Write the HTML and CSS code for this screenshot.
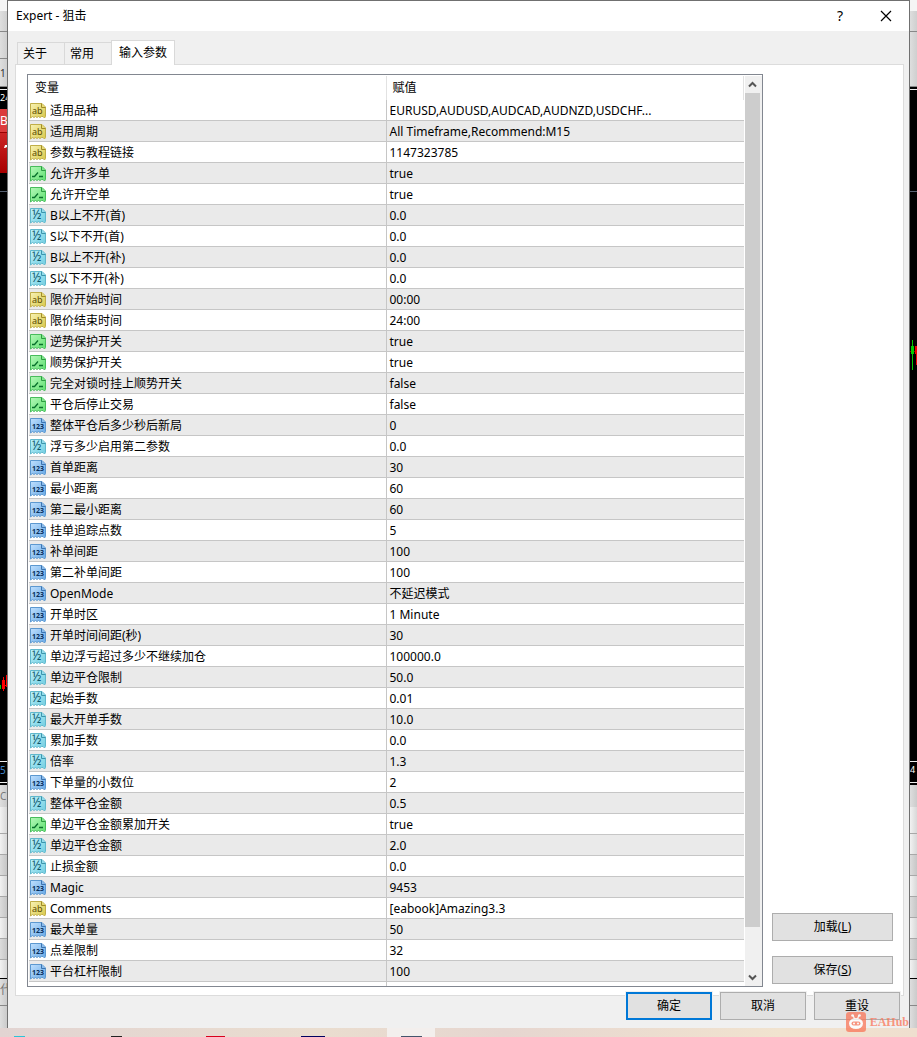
FILE: index.html
```
<!DOCTYPE html>
<html lang="zh-CN">
<head>
<meta charset="utf-8">
<title>Expert - 狙击</title>
<link rel="stylesheet" href="styles.css">
</head>
<body>
<svg class="defs" aria-hidden="true">
  <defs>
    <linearGradient id="gy" x1="0" y1="0" x2="1" y2="1"><stop offset="0" stop-color="#f8f2b4"/><stop offset="1" stop-color="#d8c84a"/></linearGradient>
    <linearGradient id="gg" x1="0" y1="0" x2="1" y2="1"><stop offset="0" stop-color="#b4f8b8"/><stop offset="1" stop-color="#5fe070"/></linearGradient>
    <linearGradient id="gc" x1="0" y1="0" x2="1" y2="1"><stop offset="0" stop-color="#bdf2fa"/><stop offset="1" stop-color="#70cce0"/></linearGradient>
    <linearGradient id="gb" x1="0" y1="0" x2="1" y2="1"><stop offset="0" stop-color="#bfe0ff"/><stop offset="1" stop-color="#68a8e4"/></linearGradient>
    <path id="page" d="M.5.5H12L15.500 4V13.500L14.500 15 13 13.500 11.500 13.500 10 14.500 8.500 13.500 7 14.500 5.500 13.500 4 14.500 2.500 13.500.5 15Z"/>
    <path id="fold" d="M11.500.5V4.500H15.500"/>
    <symbol id="str" viewBox="0 0 16 16"><use href="#page" fill="url(#gy)" stroke="#c0ae48"/><use href="#fold" fill="#e8dc78" stroke="#a08c28"/><text x="2" y="11" class="glyph" fill="#5c4c00">ab</text></symbol>
    <symbol id="bool" viewBox="0 0 16 16"><use href="#page" fill="url(#gg)" stroke="#48bc5c"/><use href="#fold" fill="#80e88c" stroke="#2c9c40"/><path d="M2 10.500H4.500L8 6.500M9 10.500H13" fill="none" stroke="#08702c" stroke-width="1.300"/></symbol>
    <symbol id="dbl" viewBox="0 0 16 16"><use href="#page" fill="url(#gc)" stroke="#60b8cc"/><use href="#fold" fill="#94dcec" stroke="#3c94ac"/><text x="2" y="11" class="half" fill="#0c5468">½</text></symbol>
    <symbol id="int" viewBox="0 0 16 16"><use href="#page" fill="url(#gb)" stroke="#5c98d0"/><use href="#fold" fill="#8cbcec" stroke="#3c74b0"/><text x="2" y="11" class="digits" fill="#08305c">123</text></symbol>
  </defs>
</svg>
<div class="desktop">
  <div class="strip" aria-hidden="true">
    <div class="s h11 pale"></div><div class="s h21 tool"></div><div class="s h27 tool"></div><div class="s h28 tool dark-text">1</div>
    <div class="s h3 black whiteline"></div><div class="s h19 black small">24</div><div class="s h24 red">B</div><div class="s h40 crimson"><svg width="7" height="20" viewBox="0 0 7 20"><path d="M4 15L5 12H7V14L5 15Z" fill="#fff"/></svg></div>
    <div class="s h19 black blueline"></div>
    <div class="s h569 black chart-left"><svg width="7" height="20" viewBox="0 0 7 20"><path d="M0 10h1v4H0z" fill="#0c0"/><path d="M3 2h1v14H3zM6 0h1v12H6zM2 5h3v9H2zM5 10h2v1H5z" fill="#f00"/></svg></div>
    <div class="s h22 black whiteline blue-text">5</div><div class="s h2 black"></div>
    <div class="s h22 tool-flat">C</div><div class="s h27 light"></div><div class="s h21 light"></div><div class="s h21 mid"></div><div class="s h21 light"></div><div class="s h21 mid"></div><div class="s h21 light"></div><div class="s h21 mid"></div><div class="s h19 light blackline"></div>
    <div class="s h27 tool-flat ruled cjk">代</div><div class="s rest tool-flat"></div>
  </div>

  <main class="dialog">
    <header class="titlebar">
      <h1>Expert - 狙击</h1>
      <button class="caption" aria-label="帮助"><span>?</span></button>
      <button class="caption" aria-label="关闭"><svg width="12" height="12" viewBox="0 0 12 12"><path d="M1 1L11 11M11 1L1 11" stroke="#000" stroke-width="1.200"/></svg></button>
    </header>
    <div class="tabs" role="tablist">
      <button role="tab" class="tab">关于</button><button role="tab" class="tab">常用</button><button role="tab" class="tab active" aria-selected="true">输入参数</button>
    </div>
    <section class="pane">
      <div class="list">
        <table>
          <thead><tr><th>变量</th><th>赋值</th></tr></thead>
          <tbody>
<tr><td><svg><use href="#str"/></svg>适用品种</td><td>EURUSD,AUDUSD,AUDCAD,AUDNZD,USDCHF...</td></tr>
<tr><td><svg><use href="#str"/></svg>适用周期</td><td>All Timeframe,Recommend:M15</td></tr>
<tr><td><svg><use href="#str"/></svg>参数与教程链接</td><td>1147323785</td></tr>
<tr><td><svg><use href="#bool"/></svg>允许开多单</td><td>true</td></tr>
<tr><td><svg><use href="#bool"/></svg>允许开空单</td><td>true</td></tr>
<tr><td><svg><use href="#dbl"/></svg>B以上不开(首)</td><td>0.0</td></tr>
<tr><td><svg><use href="#dbl"/></svg>S以下不开(首)</td><td>0.0</td></tr>
<tr><td><svg><use href="#dbl"/></svg>B以上不开(补)</td><td>0.0</td></tr>
<tr><td><svg><use href="#dbl"/></svg>S以下不开(补)</td><td>0.0</td></tr>
<tr><td><svg><use href="#str"/></svg>限价开始时间</td><td>00:00</td></tr>
<tr><td><svg><use href="#str"/></svg>限价结束时间</td><td>24:00</td></tr>
<tr><td><svg><use href="#bool"/></svg>逆势保护开关</td><td>true</td></tr>
<tr><td><svg><use href="#bool"/></svg>顺势保护开关</td><td>true</td></tr>
<tr><td><svg><use href="#bool"/></svg>完全对锁时挂上顺势开关</td><td>false</td></tr>
<tr><td><svg><use href="#bool"/></svg>平仓后停止交易</td><td>false</td></tr>
<tr><td><svg><use href="#int"/></svg>整体平仓后多少秒后新局</td><td>0</td></tr>
<tr><td><svg><use href="#dbl"/></svg>浮亏多少启用第二参数</td><td>0.0</td></tr>
<tr><td><svg><use href="#int"/></svg>首单距离</td><td>30</td></tr>
<tr><td><svg><use href="#int"/></svg>最小距离</td><td>60</td></tr>
<tr><td><svg><use href="#int"/></svg>第二最小距离</td><td>60</td></tr>
<tr><td><svg><use href="#int"/></svg>挂单追踪点数</td><td>5</td></tr>
<tr><td><svg><use href="#int"/></svg>补单间距</td><td>100</td></tr>
<tr><td><svg><use href="#int"/></svg>第二补单间距</td><td>100</td></tr>
<tr><td><svg><use href="#int"/></svg>OpenMode</td><td>不延迟模式</td></tr>
<tr><td><svg><use href="#int"/></svg>开单时区</td><td>1 Minute</td></tr>
<tr><td><svg><use href="#int"/></svg>开单时间间距(秒)</td><td>30</td></tr>
<tr><td><svg><use href="#dbl"/></svg>单边浮亏超过多少不继续加仓</td><td>100000.0</td></tr>
<tr><td><svg><use href="#dbl"/></svg>单边平仓限制</td><td>50.0</td></tr>
<tr><td><svg><use href="#dbl"/></svg>起始手数</td><td>0.01</td></tr>
<tr><td><svg><use href="#dbl"/></svg>最大开单手数</td><td>10.0</td></tr>
<tr><td><svg><use href="#dbl"/></svg>累加手数</td><td>0.0</td></tr>
<tr><td><svg><use href="#dbl"/></svg>倍率</td><td>1.3</td></tr>
<tr><td><svg><use href="#int"/></svg>下单量的小数位</td><td>2</td></tr>
<tr><td><svg><use href="#dbl"/></svg>整体平仓金额</td><td>0.5</td></tr>
<tr><td><svg><use href="#bool"/></svg>单边平仓金额累加开关</td><td>true</td></tr>
<tr><td><svg><use href="#dbl"/></svg>单边平仓金额</td><td>2.0</td></tr>
<tr><td><svg><use href="#dbl"/></svg>止损金额</td><td>0.0</td></tr>
<tr><td><svg><use href="#int"/></svg>Magic</td><td>9453</td></tr>
<tr><td><svg><use href="#str"/></svg>Comments</td><td>[eabook]Amazing3.3</td></tr>
<tr><td><svg><use href="#int"/></svg>最大单量</td><td>50</td></tr>
<tr><td><svg><use href="#int"/></svg>点差限制</td><td>32</td></tr>
<tr><td><svg><use href="#int"/></svg>平台杠杆限制</td><td>100</td></tr>
          </tbody>
          <tfoot><tr><td></td><td></td></tr></tfoot>
        </table>
        <div class="scrollbar">
          <button class="arrow" aria-label="向上滚动"><svg width="9" height="7" viewBox="0 0 9 7"><path d="M1 5.500L4.500 2 8 5.500" fill="none" stroke="#555" stroke-width="2"/></svg></button>
          <div class="track"><div class="thumb"></div></div>
          <button class="arrow" aria-label="向下滚动"><svg width="9" height="7" viewBox="0 0 9 7"><path d="M1 1.500L4.500 5 8 1.500" fill="none" stroke="#555" stroke-width="2"/></svg></button>
        </div>
      </div>
      <div class="side">
        <button class="btn">加载(<u>L</u>)</button>
        <button class="btn">保存(<u>S</u>)</button>
      </div>
    </section>
    <footer class="actions">
      <button class="btn default">确定</button><button class="btn">取消</button><button class="btn">重设</button>
    </footer>
  </main>

  <div class="strip right" aria-hidden="true">
    <div class="s h11 pale"></div><div class="s h21 tool"></div><div class="s h55 tool"></div>
    <div class="s h3 black whiteline"></div><div class="s h83 black"></div>
    <div class="s h19 black blueline"></div>
    <div class="s h569 black chart-right"><svg width="7" height="30" viewBox="0 0 7 30"><path d="M0 11h7v1H0z" fill="#900"/><path d="M2 0h1v30H2zM1 6h3v8H1z" fill="#0c0"/><path d="M5 6h2v8H5zM6 14h1v11H6z" fill="#e00"/></svg></div>
    <div class="s h22 black whiteline small">4</div><div class="s h2 black"></div>
    <div class="s h22 tool-flat"></div><div class="s h27 light"></div><div class="s h21 light"></div><div class="s h21 mid"></div><div class="s h21 light"></div><div class="s h21 mid"></div><div class="s h21 light"></div><div class="s h21 mid"></div><div class="s h19 light blackline"></div>
    <div class="s h27 tool-flat ruled"></div><div class="s rest tool-flat"></div>
  </div>
</div>
<div class="taskbar" aria-hidden="true"><i class="cyan"></i><i class="charcoal"></i><i class="red"></i><i class="navy"></i><b><i class="slate"></i></b></div>
<div class="watermark">
  <svg width="20" height="20" viewBox="0 0 20 20"><rect width="20" height="20" rx="3" fill="#fa7658"/><path d="M7 3L8.500 7M13 3L11.500 7" stroke="#fff" stroke-width="1.200"/><circle cx="6.500" cy="3.500" r="1.300" fill="#fff"/><circle cx="13.500" cy="3.500" r="1.300" fill="#fff"/><ellipse cx="10" cy="11.500" rx="7" ry="5.500" fill="#fff"/><rect x="5.500" y="9.500" width="9" height="4" rx="2" fill="#fa7658"/><circle cx="8" cy="11.500" r="1" fill="#fff"/><circle cx="12" cy="11.500" r="1" fill="#fff"/></svg>
  <span>EAHub</span>
</div>
</body>
</html>
```
FILE: styles.css
```
* { box-sizing: border-box; }
body {
  margin: 0;
  min-height: 100vh;
  display: flex;
  flex-direction: column;
  position: relative;
  overflow-x: hidden;
  color: #000;
  font: 12px/16px "Noto Sans", "Noto Sans CJK SC", sans-serif;
}
button { font: inherit; color: inherit; padding: 0; border: 0; background: none; }
.defs { position: absolute; width: 0; height: 0; }
.glyph { font: 9px "Noto Sans", sans-serif; }
.half { font: 12px "Noto Sans", sans-serif; }
.digits { font: bold 7px "Noto Sans", sans-serif; }

.desktop { flex: 1; display: grid; grid-template-columns: 7px 1fr 7px; }

/* Slices of the trading terminal behind the dialog */
.strip { display: flex; flex-direction: column; overflow: hidden; color: #fff; font-size: 10px; }
.s { flex: none; overflow: hidden; white-space: nowrap; }
.h2 { height: 2px; } .h3 { height: 3px; } .h11 { height: 11px; } .h19 { height: 19px; }
.h21 { height: 21px; } .h22 { height: 22px; } .h24 { height: 24px; } .h27 { height: 27px; }
.h28 { height: 28px; } .h40 { height: 40px; } .h55 { height: 55px; } .h83 { height: 83px; }
.h569 { height: 569px; }
.rest { flex: 1; }
.pale { background: #f5f5f5; }
.tool { background: linear-gradient(90deg, #dedede, #cfcfcf); border-bottom: 1px solid #888; }
.dark-text { color: #333; line-height: 28px; }
.tool-flat { background: linear-gradient(90deg, #dedede, #cbcbcb); color: #777; line-height: 22px; }
.light { background: linear-gradient(90deg, #f2f2f2, #d8d8d8); border-bottom: 1px solid #a8a8a8; }
.mid { background: linear-gradient(90deg, #dcdcdc, #c6c6c6); border-bottom: 1px solid #a8a8a8; }
.black { background: #000; }
.whiteline { border-top: 1px solid #eee; border-bottom: 1px solid #eee; }
.h3.whiteline { border-top-color: #000; }
.blueline { border-bottom: 1px solid #566070; }
.blackline { border-bottom-color: #000; }
.ruled { border-bottom: 1px solid #888; }
.small { font-size: 9px; }
.cjk { font-size: 12px; }
.blue-text { color: #48c; }
.red { background: #dc3c3c; line-height: 24px; font-size: 12px; border-bottom: 1px solid #900; }
.crimson { background: linear-gradient(#cc2424, #a80000); }
.chart-left { padding-top: 483px; }
.chart-right { padding-top: 148px; }
.strip svg { display: block; }

.dialog {
  display: flex;
  flex-direction: column;
  min-width: 0;
  background: #f0f0f0;
  border: 1px solid #707070;
  border-bottom: 0;
}
.titlebar { display: flex; height: 30px; background: #fff; padding-left: 8px; align-items: center; }
.titlebar h1 { flex: 1; margin: 0; font-size: 12px; font-weight: 400; }
.caption { width: 46px; height: 30px; display: flex; align-items: center; justify-content: center; font-size: 14px; }

.tabs { display: flex; align-items: flex-end; height: 34px; padding-left: 9px; position: relative; margin-bottom: -1px; }
.tab { height: 23px; padding: 0 17px 0 5px; background: #f0f0f0; border: 1px solid #d9d9d9; border-right: 0; }
.tab.active { height: 25px; padding: 0 7px 1px; background: #fff; border-right: 1px solid #d9d9d9; border-bottom: 0; }

.pane { display: flex; gap: 9px; margin: 0 5px 0 7px; padding: 9px 10px 8px 11px; background: #fff; border: 1px solid #dcdcdc; }
.list { flex: 1; display: flex; gap: 1px; padding: 1px 0 0 1px; border: 1px solid #828790; }
table { flex: 1; width: 100%; border-collapse: separate; border-spacing: 0; table-layout: fixed; align-self: flex-start; }
th { width: 50%; height: 24px; padding: 0 6px; text-align: left; font-weight: 400; border-right: 1px solid #e2e2e2; }
td { height: 21px; padding: 2px 3px 0; border-bottom: 1px solid #c6c6c6; white-space: nowrap; overflow: hidden; }
td:first-child { padding-left: 1px; border-right: 1px solid #c6c6c6; }
tbody tr:nth-child(even) { background: #eaeaea; }
td svg { width: 16px; height: 16px; margin-right: 4px; vertical-align: top; }
tfoot td { height: 4px; border-bottom: 0; }

.scrollbar { flex: none; width: 17px; display: flex; flex-direction: column; background: #f0f0f0; }
.arrow { height: 17px; display: flex; align-items: center; justify-content: center; padding-right: 2px; }
.track { flex: 1; display: grid; grid-template-rows: 20fr 1fr; }
.thumb { width: 15px; background: #cdcdcd; }

.side { width: 121px; display: flex; flex-direction: column; justify-content: flex-end; gap: 15px; padding-bottom: 3px; }
.btn { height: 28px; background: #e1e1e1; border: 1px solid #adadad; }
.actions { display: flex; justify-content: flex-end; gap: 8px; padding: 0 9px 8px; margin-top: -4px; }
.actions .btn { width: 86px; outline: 1px solid #f0f0f0; }
.actions .default { border: 2px solid #0078d7; }

.taskbar { height: 9px; display: flex; align-items: flex-end; padding-left: 14px; background: linear-gradient(90deg, #e2d4d2, #eaddcf 35%, #e6d6d0 55%, #f1e3cf 85%, #efdfcf); }
.taskbar i { height: 1px; }
.cyan { width: 11px; background: #2cc4d8; }
.charcoal { width: 11px; margin-left: 86px; background: #222; }
.taskbar .red { width: 19px; margin-left: 84px; background: #d8001c; border: 0; }
.navy { width: 24px; margin-left: 76px; background: #000060; }
.taskbar b { width: 48px; height: 9px; margin-left: 62px; display: flex; align-items: flex-end; justify-content: center; background: #f3efed; }
.slate { width: 21px; background: #44546c; }

.watermark { position: absolute; right: 8px; bottom: 5px; display: flex; align-items: center; gap: 4px; opacity: .75; color: #fa7658; font: bold 12px "Liberation Serif", serif; }
```
